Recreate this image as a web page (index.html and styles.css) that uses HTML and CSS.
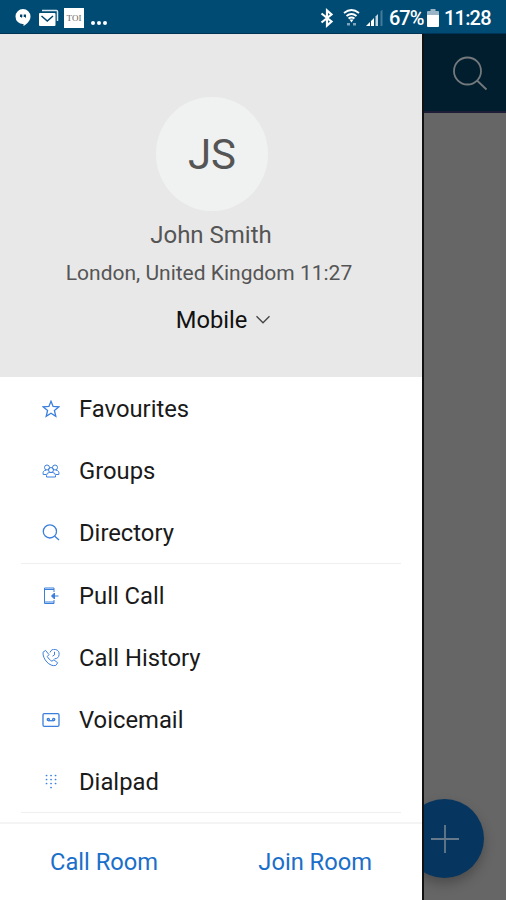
FILE: index.html
```html
<!DOCTYPE html>
<html lang="en">
<head>
  <meta charset="UTF-8" />
  <meta name="viewport" content="width=device-width, initial-scale=1.0" />
  <title>Menu</title>
  <link rel="stylesheet" href="styles.css">
</head>
<body>
  <header class="status-bar">
    <div class="status-left">
      <svg class="hangouts" width="18" height="19" viewBox="0 0 18 19">
        <path fill="#fff" d="M9 1a7.500 7.500 0 0 1 7.500 7.500c0 4-3.500 7.500-7 9.500V16A7.400 7.400 0 0 1 1.500 8.500 7.500 7.500 0 0 1 9 1z"/>
        <path fill="#00456b" d="M6 6.500h2.300v2.500l-1 1.200V9H6zM9.700 6.500H12v2.500l-1 1.200V9H9.700z"/>
      </svg>
      <svg class="mail" width="21" height="18" viewBox="0 0 21 18">
        <path fill="none" stroke="#dce9f0" stroke-width="1.500" d="M4 1.500h14.500a1 1 0 0 1 1 1V12"/>
        <rect x="1" y="4" width="16.500" height="13" rx="1" fill="#fff"/>
        <path fill="none" stroke="#00456b" stroke-width="1.500" d="M3.500 7l5.800 5L15 7"/>
      </svg>
      <span class="toi">TOI</span>
      <span class="more"><i></i><i></i><i></i></span>
    </div>
    <div class="status-right">
      <svg class="bluetooth" width="14" height="20" viewBox="0 0 14 20">
        <path fill="none" stroke="#fff" stroke-width="2.200" d="M1.500 5.500l10 8L7 17.500v-15l4.500 4-10 8"/>
      </svg>
      <svg class="wifi" width="17" height="19" viewBox="0 0 17 19">
        <g fill="none" stroke="#fff" stroke-width="1.900">
          <path d="M1 5q7.500-6 15 0"/>
          <path d="M3.500 8q5-4 10 0"/>
          <path d="M5.500 10.500q3-2 6 0"/>
        </g>
        <path fill="#fff" d="M6.500 11.500h4l-2 3z"/>
        <path fill="#7fa5bc" d="M4 15h3v2.500H4zM10 15h3v2.500h-3z"/>
      </svg>
      <svg class="signal" width="17" height="18" viewBox="0 0 17 18">
        <path fill="#fff" d="M0 17l4-4v4zM5 12l3-3v8H5z"/>
        <path fill="#c4d4de" d="M9.500 7.500l2.500-2.500v12H9.500z"/>
        <path fill="#457b9a" d="M14.500 2.500L16.500 .5V17h-2z"/>
      </svg>
      <span class="percent">67%</span>
      <svg class="battery" width="12" height="18" viewBox="0 0 12 18">
        <path fill="#9ab5c5" d="M3.500 0h5v2H11a1 1 0 0 1 1 1v3H0V3a1 1 0 0 1 1-1h2.500z"/>
        <path fill="#fff" d="M0 6h12v11a1 1 0 0 1-1 1H1a1 1 0 0 1-1-1z"/>
      </svg>
      <span class="clock">11:28</span>
    </div>
  </header>

  <div class="screen">
    <nav class="drawer">
      <section class="profile">
        <div class="avatar">JS</div>
        <div class="name">John Smith</div>
        <div class="location">London, United Kingdom 11:27</div>
        <div class="device">
          <span>Mobile</span>
          <svg width="16" height="10" viewBox="0 0 16 10"><path fill="none" stroke="#444" stroke-width="1.300" d="M1.500 1.200L8 7.800l6.500-6.600"/></svg>
        </div>
      </section>

      <ul class="menu">
        <li>
          <svg class="icon" viewBox="0 0 18 18"><path d="M9 1.300l2.100 5.200 5.600.4-4.300 3.600 1.400 5.800L9 13.300l-4.800 3 1.400-5.800L1.300 6.900l5.600-.4z"/></svg>
          <span>Favourites</span>
        </li>
        <li>
          <svg class="icon thin" viewBox="0 0 18 18">
            <circle cx="5" cy="5.500" r="2.500"/><circle cx="13" cy="5.500" r="2.500"/>
            <circle cx="9" cy="8" r="2.500"/>
            <path d="M4.500 15v-1.700a3 3 0 0 1 3-2.800h3a3 3 0 0 1 3 2.800V15zM4 12.500H1.200c-.7-2.500.6-4.200 3-4.400M14 12.500h2.800c.7-2.500-.6-4.200-3-4.400"/>
          </svg>
          <span>Groups</span>
        </li>
        <li>
          <svg class="icon" viewBox="0 0 18 18"><circle cx="7.900" cy="7.400" r="6.600"/><path d="M12.800 12.300l4.200 3.700"/></svg>
          <span>Directory</span>
        </li>
      </ul>
      <ul class="menu">
        <li>
          <svg class="icon thin" viewBox="0 0 18 18">
            <path d="M12 5V1H2.500v15.500H12V13M2.500 2.500H12M2.500 15H12"/>
            <path d="M16.500 9H10"/><path fill="#3b7fdc" d="M12.500 6L9.500 9l3 3z"/>
          </svg>
          <span>Pull Call</span>
        </li>
        <li>
          <svg class="icon thin" viewBox="0 0 18 18">
            <path d="M1 3.300L3.500 1.400 7 5.600 5.300 7.500c1 2 2.500 3.500 4.600 4.700l2-1.400 3.800 3-2 2.700C7.500 18 .5 10 1 3.300z"/>
            <path d="M8 3.500a4.700 4.700 0 1 1 4.500 6.300M12.500 2.800v3.100l-2 1.300"/>
          </svg>
          <span>Call History</span>
        </li>
        <li>
          <svg class="icon" viewBox="0 0 18 18">
            <rect x="1" y="2.600" width="16" height="12.800" rx="1.300"/>
            <circle cx="6.300" cy="8.600" r="1.100"/><circle cx="11.700" cy="8.600" r="1.100"/><path d="M6.300 9.700h5.400"/>
          </svg>
          <span>Voicemail</span>
        </li>
        <li>
          <svg class="icon dots" viewBox="0 0 18 18">
            <path d="M4.500 2.500h.1M9 2.500h.1M13.500 2.500h.1M4.500 6.500h.1M9 6.500h.1M13.500 6.500h.1M4.500 10.500h.1M9 10.500h.1M13.500 10.500h.1M9 14.500h.1"/>
          </svg>
          <span>Dialpad</span>
        </li>
      </ul>

      <div class="rooms">
        <a class="call-room">Call Room</a>
        <a class="join-room">Join Room</a>
      </div>
    </nav>

    <main class="page">
      <div class="toolbar">
        <svg width="36" height="36" viewBox="0 0 36 36"><g fill="none" stroke="#73797c" stroke-width="1.800"><circle cx="15.500" cy="15" r="13.500"/><path d="M25 24.500l9.500 9"/></g></svg>
      </div>
      <div class="fab">
        <svg width="30" height="30" viewBox="0 0 30 30"><path stroke="#66798a" stroke-width="1.800" d="M15 1v28M1 15h28"/></svg>
      </div>
    </main>
  </div>
</body>
</html>
```

FILE: styles.css
```css
* {
  box-sizing: border-box;
}
body {
  margin: 0;
  height: 900px;
  display: flex;
  flex-direction: column;
  overflow: hidden;
  font-family: Roboto, "Liberation Sans", sans-serif;
  background: #666;
}
svg {
  display: block;
  flex: none;
}
.status-bar {
  height: 34px;
  padding: 2px 14px 0 14px;
  display: flex;
  justify-content: space-between;
  align-items: center;
  background: #004b73;
  border-bottom: 1px solid #003457;
  color: #fff;
}
.status-left, .status-right {
  display: flex;
  align-items: center;
}
.mail {
  margin-left: 6px;
}
.toi {
  width: 20px;
  height: 20px;
  margin-left: 5px;
  background: #fff;
  color: #666;
  font: 9px/20px "Liberation Serif", serif;
  text-align: center;
}
.more {
  display: flex;
  gap: 2px;
  margin: 11px 0 0 7px;
}
.more i {
  width: 4px;
  height: 4px;
  border-radius: 50%;
  background: #fff;
}
.wifi {
  margin-left: 9px;
}
.signal {
  margin-left: 6px;
}
.percent, .clock {
  font-size: 20px;
  font-weight: 500;
  line-height: 24px;
}
.percent {
  width: 34px;
  margin-left: 6px;
  letter-spacing: -1px;
}
.battery {
  margin-left: 4px;
}
.clock {
  width: 48px;
  margin-left: 5px;
  letter-spacing: -0.8px;
}
.screen {
  flex: 1;
  display: flex;
}
.drawer {
  width: 422px;
  display: flex;
  flex-direction: column;
  background: #fff;
}
.profile {
  height: 343px;
  padding-top: 63px;
  display: flex;
  flex-direction: column;
  align-items: center;
  background: #e8e8e8;
}
.avatar {
  width: 112px;
  height: 114px;
  margin-left: 2px;
  border-radius: 50%;
  background: #f0f2f2;
  color: #555;
  font-size: 42px;
  line-height: 115px;
  text-align: center;
}
.name {
  margin-top: 9px;
  color: #555;
  font-size: 24px;
  line-height: 30px;
}
.location {
  margin: 9px 4px 0 0;
  color: #555;
  font-size: 21px;
  line-height: 28px;
}
.device {
  margin: 18px 0 0 25px;
  display: flex;
  align-items: center;
  gap: 8px;
  font-size: 23.700px;
  line-height: 30px;
  color: #111;
}
.menu {
  list-style: none;
  margin: 0 21px;
  padding: 0;
  border-bottom: 1px solid #efefef;
}
.menu li {
  height: 62px;
  padding: 2px 0 0 21px;
  display: flex;
  align-items: center;
  gap: 19px;
  font-size: 23.800px;
  color: #1a1a1a;
}
.icon {
  width: 18px;
  height: 18px;
  fill: none;
  stroke: #3b7fdc;
  stroke-width: 1.3;
}
.menu .icon {
  margin-top: -1px;
}
.thin {
  stroke-width: 1;
}
.dots {
  stroke-width: 1.7;
  stroke-linecap: round;
}
.rooms {
  flex: 1;
  margin-top: 9px;
  padding: 0 50px;
  display: flex;
  justify-content: space-between;
  align-items: center;
  border-top: 2px solid #f4f4f4;
  font-size: 23.700px;
  color: #1a6fca;
}
.page {
  flex: 1;
  position: relative;
  overflow: hidden;
  background: #666;
  border-left: 2px solid #111;
}
.toolbar {
  height: 79px;
  padding: 22px 0 0 28px;
  background: #001e2e;
  border-bottom: 2px solid #1d1d38;
}
/* floating button, half hidden by the drawer */
.fab {
  position: absolute;
  left: -19px;
  bottom: 22px;
  width: 79px;
  height: 79px;
  border-radius: 50%;
  display: flex;
  align-items: center;
  justify-content: center;
  background: #06365f;
  box-shadow: 0 6px 12px rgba(0, 0, 0, 0.25);
}
```
